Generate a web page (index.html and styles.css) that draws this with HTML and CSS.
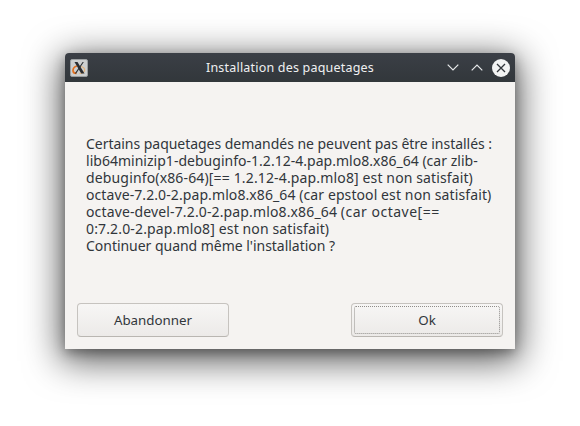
FILE: index.html
```html
<!DOCTYPE html>
<html lang="fr">
<head>
<meta charset="utf-8">
<title>Installation des paquetages</title>
<link rel="stylesheet" href="styles.css">
</head>
<body>
<div class="window">
  <header class="titlebar">
    <div class="left">
      <svg class="app-icon" width="18" height="18" viewBox="0 0 18 18">
        <rect x="0.5" y="0.5" width="17" height="17" rx="1.5" fill="#cdcfcf" stroke="#9a9ea0"/>
        <path d="M7 7 Q3 8 3 11.5 Q3 14.5 6.5 14.5" fill="none" stroke="#e2701f" stroke-width="1.7"/>
        <path d="M11 7.5 Q15 8.5 14.6 11.5 Q14 14.5 9.5 14.5" fill="none" stroke="#e3b27a" stroke-width="1.2"/>
        <path d="M4.5 3 L7.5 3 L14.5 14.5 L11.2 14.5 Z" fill="#2a2d31"/>
        <path d="M12.6 3 L13.8 3 L6.2 14.5 L4.8 14.5 Z" fill="#2a2d31"/>
      </svg>
    </div>
    <div class="title">Installation des paquetages</div>
    <div class="controls">
      <svg class="ctl" width="12" height="7" viewBox="0 0 12 7"><path d="M0.7 0.7 L6 6 L11.3 0.7" fill="none" stroke="#e8eaeb" stroke-width="1.2"/></svg>
      <svg class="ctl" width="12" height="7" viewBox="0 0 12 7"><path d="M0.7 6.3 L6 1 L11.3 6.3" fill="none" stroke="#e8eaeb" stroke-width="1.2"/></svg>
      <svg class="close" width="18" height="18" viewBox="0 0 18 18"><circle cx="9" cy="9" r="9" fill="#f2f3f3"/><path d="M5 5 L13 13 M13 5 L5 13" stroke="#31363b" stroke-width="1.3"/></svg>
    </div>
  </header>
  <main class="content">
    <p class="message"><span class="l1">Certains paquetages demandés ne peuvent pas être installés :</span><br>
<span class="l2">lib64minizip1-debuginfo-1.2.12-4.pap.mlo8.x86_64 (car zlib-</span><br>
<span class="l3">debuginfo(x86-64)[== 1.2.12-4.pap.mlo8] <span class="ens">est non satisfait)</span></span><br>
<span class="l4">octave-7.2.0-2.pap.mlo8.x86_64 (car epstool <span class="ens">est non satisfait)</span></span><br>
<span class="l5">octave-devel-7.2.0-2.pap.mlo8.x86_64 <span class="wide">(car octave[==</span></span><br>
<span class="l6">0:7.2.0-2.pap.mlo8] <span class="ens">est non satisfait)</span></span><br>
<span class="l7">Continuer quand même l'installation ?</span></p>
    <div class="buttons">
      <button class="btn">Abandonner</button>
      <button class="btn default"><span class="focus">Ok</span></button>
    </div>
  </main>
</div>
</body>
</html>
```
FILE: styles.css
```css
html, body { margin: 0; height: 100%; }
body {
  width: 580px; height: 426px; overflow: hidden; background: #fff;
  font-family: "Noto Sans", sans-serif; font-size: 13.33px; color: #31363b;
  padding: 53px 65px 77px; box-sizing: border-box;
}
.window {
  width: 450px; height: 296px; display: flex; flex-direction: column;
  border-radius: 4px 4px 0 0; background: #f5f3f1;
  box-shadow: 0 8px 36px 4px rgba(0,0,0,.65), 0 4px 12px rgba(0,0,0,.3);
}
.titlebar {
  height: 29px; flex: none; display: grid; grid-template-columns: 1fr auto 1fr; align-items: center;
  background: linear-gradient(#3b3f46, #32373b); color: #eff0f1;
  border-radius: 4px 4px 0 0; padding: 0 5px;
}
.left { display: flex; }
.title { text-align: center; font-size: 12.5px; letter-spacing: .2px; }
.controls { display: flex; align-items: center; justify-content: flex-end; gap: 12px; }
.ctl { position: relative; left: 1px; }
.close { margin-left: -2px; }
.content {
  flex: 1; display: flex; flex-direction: column; justify-content: space-between;
  padding: 53px 12px 12px;
}
.message { margin: 0 9px; font-size: 14px; line-height: 17px; white-space: nowrap; }
.l1 { letter-spacing: -.033px; }
.l2 { letter-spacing: .02px; }
.l3 { letter-spacing: .15px; }
.l4 { letter-spacing: .09px; }
.l5 { letter-spacing: .135px; }
.l6 { letter-spacing: .15px; }
.l7 { letter-spacing: -.03px; }
.ens { letter-spacing: .12px; }
.wide { letter-spacing: .5px; }
.buttons { display: flex; justify-content: space-between; }
.btn {
  width: 152px; height: 34px; padding: 2px; box-sizing: border-box;
  border: 1px solid #c6c3bf; border-bottom-color: #b9b6b1; border-radius: 4px;
  background: linear-gradient(#f7f6f5, #eceae8);
  font: inherit; color: inherit;
}
.focus {
  display: flex; align-items: center; justify-content: center; height: 100%;
  border: 1px dotted #8f8d8a; border-radius: 2px; box-sizing: border-box;
}
```
